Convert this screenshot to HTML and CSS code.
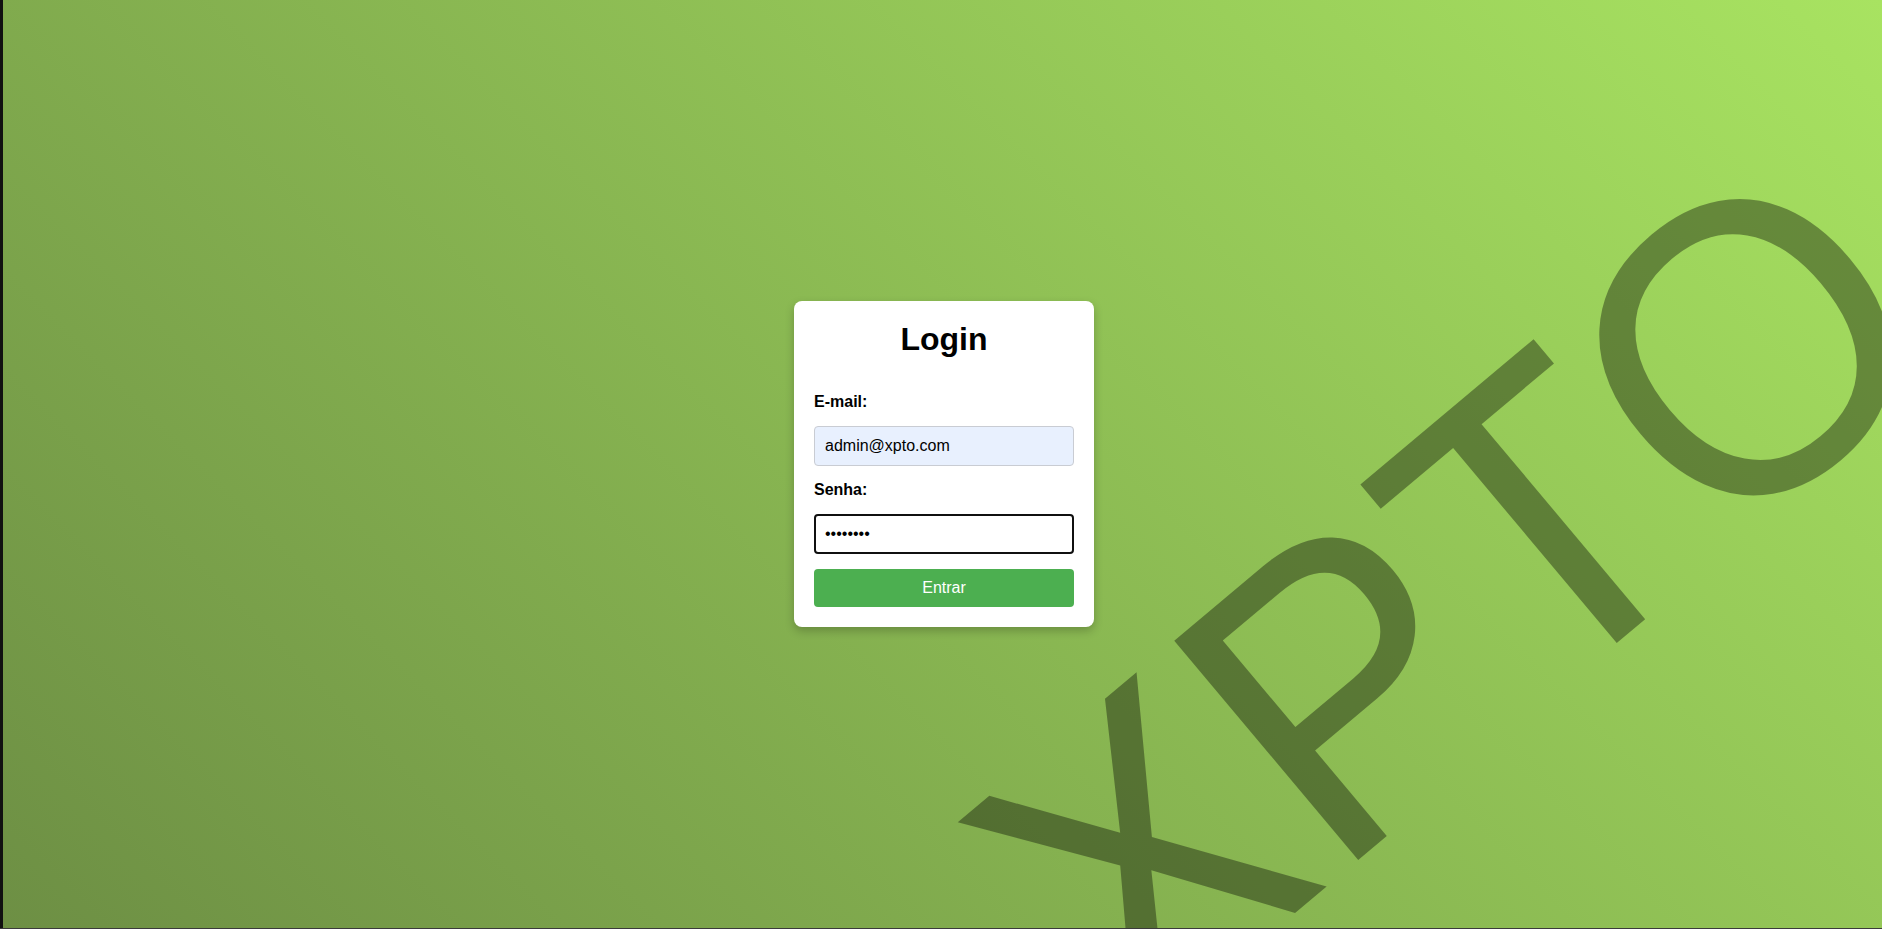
FILE: index.html
```html
<!DOCTYPE html>
<html lang="pt-BR">
<head>
<meta charset="utf-8">
<title>Login</title>
<link rel="stylesheet" href="styles.css">
</head>
<body>
<div class="shell">
  <div class="edge"></div>
  <main class="page">
    <svg class="watermark" width="100%" height="100%" aria-hidden="true">
      <text x="0" y="0" transform="translate(1125.7 1052.5) rotate(-40) scale(1 1.04)">XPTO</text>
    </svg>
    <div class="login-card">
      <h1 class="login-title">Login</h1>
      <form class="login-form">
        <label class="field-label" for="email">E-mail:</label>
        <input class="field-input field-autofill" id="email" type="email" value="admin@xpto.com">
        <label class="field-label" for="senha">Senha:</label>
        <input class="field-input field-focused" id="senha" type="password" value="12345678">
        <button class="submit-btn" type="button">Entrar</button>
      </form>
    </div>
  </main>
</div>
</body>
</html>
```
FILE: styles.css
```css
html, body {
  margin: 0;
  padding: 0;
  height: 100%;
}
body {
  background: #3b3b3b;
  font-family: "Liberation Sans", Arial, sans-serif;
  overflow: hidden;
}
.shell {
  display: flex;
  height: 928px;
}
.edge {
  width: 3px;
  background: #111111;
  flex: none;
}
.page {
  flex: 1;
  position: relative;
  overflow: hidden;
  display: flex;
  align-items: center;
  justify-content: center;
  padding-left: 3px;
  background: linear-gradient(45deg, #6d8f44 0%, #a8e361 100%);
}
.watermark {
  position: absolute;
  top: 0;
  left: 0;
  pointer-events: none;
}
.watermark text {
  font-family: "Liberation Sans", Arial, sans-serif;
  font-size: 400px;
  fill: rgba(0, 0, 0, 0.37);
}
.login-card {
  position: relative;
  width: 300px;
  box-sizing: border-box;
  padding: 20px;
  background: #ffffff;
  border-radius: 8px;
  box-shadow: 0 4px 10px rgba(0, 0, 0, 0.22);
}
.login-title {
  margin: 0 0 35px;
  text-align: center;
  font-size: 32px;
  font-weight: bold;
  color: #000;
  line-height: normal;
}
.login-form {
  display: flex;
  flex-direction: column;
  gap: 15px;
}
.field-label {
  font-size: 16px;
  font-weight: bold;
  color: #000;
  line-height: normal;
}
.field-input {
  box-sizing: border-box;
  width: 100%;
  height: 40px;
  padding: 10px;
  font-family: "Liberation Sans", Arial, sans-serif;
  font-size: 16px;
  color: #000;
  border: 1px solid #c9ccd3;
  border-radius: 4px;
  background: #ffffff;
  outline: none;
}
.field-autofill {
  background: #e8f0fe;
}
.field-focused {
  border: 2px solid #101010;
  padding: 9px;
}
.submit-btn {
  height: 38px;
  border: none;
  border-radius: 4px;
  background: #4caf50;
  color: #ffffff;
  font-family: "Liberation Sans", Arial, sans-serif;
  font-size: 16px;
  cursor: pointer;
}
```
